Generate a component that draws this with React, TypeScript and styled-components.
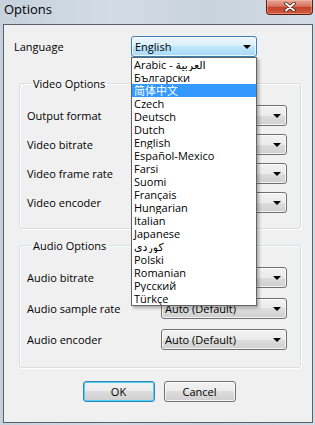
import React from "react";
import styled, { createGlobalStyle, css } from "styled-components";

const FONT = `"Open Sans", "DejaVu Sans", "Noto Sans CJK SC", sans-serif`;

const GlobalStyle = createGlobalStyle`
  html, body { margin: 0; padding: 0; }
  body {
    width: 315px; height: 425px; overflow: hidden;
    background: #d4dde6;
    font-family: ${FONT};
    font-size: 11px; color: #000;
  }
  * { box-sizing: border-box; }
`;

const Window = styled.div`
  width: 315px; height: 425px;
  display: flex; flex-direction: column;
  background: linear-gradient(90deg, #c6d1dc 0%, #d3dce5 35%, #c9d3dd 65%, #d2dbe4 100%);
`;

const TitleBar = styled.div`
  height: 24px; flex: none;
  display: flex; align-items: flex-start; justify-content: space-between;
  padding: 0 2px 0 4px;
`;

const Title = styled.div`
  font-size: 13px; line-height: 18px; color: #000;
`;

const CloseButton = styled.div`
  width: 47px; height: 15px;
  border: 1px solid #5e1d12; border-top: none;
  border-radius: 0 0 4px 4px;
  background: linear-gradient(#e7a697 0%, #d87560 45%, #c3442c 52%, #d0593d 100%);
  box-shadow: inset 0 0 0 1px rgba(255, 200, 180, 0.45);
  display: flex; align-items: center; justify-content: center;
`;

const Client = styled.div`
  margin: 0 2px 0 3px;
  height: 399px;
  border: 1px solid #56616c;
  background: #f0f0f0;
  padding: 11px 0 0 10px;
  display: flex; flex-direction: column;
`;

const TopRow = styled.div`
  display: flex; align-items: center; height: 21px;
`;

const Label = styled.span<{ $w?: number }>`
  font-size: 11px; line-height: 15px;
  ${(p) => p.$w && css`width: ${p.$w}px; flex: none;`}
`;

const ComboWrap = styled.div`
  position: relative;
`;

const Combo = styled.div<{ $w: number; $active?: boolean }>`
  width: ${(p) => p.$w}px; height: 21px;
  border: 1px solid #707070; border-radius: 3px;
  background: linear-gradient(#f2f2f2 0%, #ebebeb 50%, #dddddd 50%, #cfcfcf 100%);
  box-shadow: inset 0 0 0 1px rgba(255, 255, 255, 0.75);
  display: flex; align-items: center; justify-content: space-between;
  padding: 0 5px 0 3px;
  font-size: 11px; line-height: 15px; white-space: nowrap;
  ${(p) =>
    p.$active &&
    css`
      border-color: #3c7fb1;
      background: linear-gradient(#eaf6fd 0%, #d9f0fc 50%, #bee6fd 50%, #a7d9f5 100%);
    `}
`;

const Arrow = styled.span`
  width: 0; height: 0; flex: none;
  border-left: 4px solid transparent; border-right: 4px solid transparent;
  border-top: 4px solid #000;
  margin-top: 1px;
`;

const List = styled.ul`
  position: absolute; z-index: 10;
  top: 21px; left: 0; width: 126px;
  margin: 0; padding: 0; list-style: none;
  background: #fff;
  border: 1px solid #646464;
  box-shadow: 2px 2px 3px rgba(0, 0, 0, 0.3);
`;

const Item = styled.li<{ $sel?: boolean }>`
  height: 13px; line-height: 13px; font-size: 11px;
  padding-left: 2px; white-space: nowrap; overflow: hidden;
  ${(p) => p.$sel && css`background: #3399ff; color: #fff;`}
`;

const Group = styled.fieldset<{ $mt: number; $pt: number; $pb: number; $gap: number }>`
  margin: ${(p) => p.$mt}px 0 0 5px;
  width: 282px; min-width: 0;
  border: 1px solid #d5dfe5; border-radius: 3px;
  box-shadow: inset 1px 1px 0 #fff, 1px 1px 0 #fff;
  padding: ${(p) => p.$pt}px 13px ${(p) => p.$pb}px 7px;
  display: flex; flex-direction: column; gap: ${(p) => p.$gap}px;
`;

const Legend = styled.legend`
  margin-left: 4px; padding: 0 2px;
  font-size: 11px; line-height: 15px;
`;

const Row = styled.div`
  display: flex; align-items: center; justify-content: space-between; height: 21px;
`;

const Buttons = styled.div`
  display: flex; justify-content: center; gap: 9px;
  margin-top: 13px; padding-right: 8px;
`;

const Button = styled.button<{ $default?: boolean }>`
  width: 72px; height: 21px; padding: 0;
  font-family: ${FONT}; font-size: 11px; color: #000;
  border: 1px solid #707070; border-radius: 3px;
  background: linear-gradient(#f2f2f2 0%, #ebebeb 50%, #dddddd 50%, #cfcfcf 100%);
  box-shadow: inset 0 0 0 1px rgba(255, 255, 255, 0.8);
  ${(p) =>
    p.$default &&
    css`
      border-color: #3c7fb1;
      box-shadow: inset 0 0 0 1px #48d5fd;
    `}
`;

const languages = [
  "Arabic - العربية",
  "Български",
  "简体中文",
  "Czech",
  "Deutsch",
  "Dutch",
  "English",
  "Español-Mexico",
  "Farsi",
  "Suomi",
  "Français",
  "Hungarian",
  "Italian",
  "Japanese",
  "کوردی",
  "Polski",
  "Romanian",
  "Русский",
  "Türkçe",
];

const videoRows = ["Output format", "Video bitrate", "Video frame rate", "Video encoder"];
// the first audio combo lies fully under the open list, so its text is not shown
const audioRows: [string, string][] = [
  ["Audio bitrate", ""],
  ["Audio sample rate", "Auto (Default)"],
  ["Audio encoder", "Auto (Default)"],
];

export default function App() {
  return (
    <>
      <GlobalStyle />
      <Window>
        <TitleBar>
          <Title>Options</Title>
          <CloseButton>
            <svg width="12" height="10" viewBox="0 0 12 10">
              <path d="M2 1.5 L10 8.5 M10 1.5 L2 8.5" stroke="#4a1a10" strokeWidth="3.6" strokeLinecap="round" />
              <path d="M2 1.5 L10 8.5 M10 1.5 L2 8.5" stroke="#fff" strokeWidth="2" strokeLinecap="round" />
            </svg>
          </CloseButton>
        </TitleBar>
        <Client>
          <TopRow>
            <Label $w={117}>Language</Label>
            <ComboWrap>
              <Combo $w={126} $active>
                <span>English</span>
                <Arrow />
              </Combo>
              <List>
                {languages.map((l) => (
                  <Item key={l} $sel={l === "简体中文"}>
                    {l}
                  </Item>
                ))}
              </List>
            </ComboWrap>
          </TopRow>
          <Group $mt={19} $pt={14} $pb={15} $gap={8}>
            <Legend>Video Options</Legend>
            {videoRows.map((r) => (
              <Row key={r}>
                <Label>{r}</Label>
                <Combo $w={126}>
                  <span />
                  <Arrow />
                </Combo>
              </Row>
            ))}
          </Group>
          <Group $mt={9} $pt={14} $pb={17} $gap={10}>
            <Legend>Audio Options</Legend>
            {audioRows.map(([r, v]) => (
              <Row key={r}>
                <Label>{r}</Label>
                <Combo $w={126}>
                  <span>{v}</span>
                  <Arrow />
                </Combo>
              </Row>
            ))}
          </Group>
          <Buttons>
            <Button $default>OK</Button>
            <Button>Cancel</Button>
          </Buttons>
        </Client>
      </Window>
    </>
  );
}
